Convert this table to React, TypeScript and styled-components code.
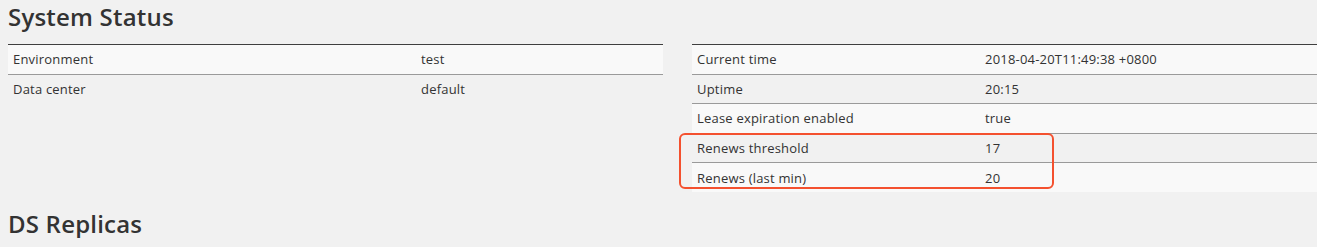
import React from "react";
import styled, { createGlobalStyle } from "styled-components";

type Row = { name: string; value: string };

const general: Row[] = [
  { name: "Environment", value: "test" },
  { name: "Data center", value: "default" },
];

const status: Row[] = [
  { name: "Current time", value: "2018-04-20T11:49:38 +0800" },
  { name: "Uptime", value: "20:15" },
  { name: "Lease expiration enabled", value: "true" },
  { name: "Renews threshold", value: "17" },
  { name: "Renews (last min)", value: "20" },
];

const GlobalStyle = createGlobalStyle`
  html, body {
    margin: 0;
    background: #f1f1f1;
    overflow: hidden;
  }
  body {
    font-family: "Open Sans", "Liberation Sans", sans-serif;
    color: #333;
  }
`;

export default function App() {
  return (
    <>
      <GlobalStyle />
      <Page>
        <Heading>System Status</Heading>
        <Columns>
          <StatusTable rows={general} width={655} nameWidth={408} />
          <RightBox>
            <StatusTable rows={status} nameWidth={288} />
            <Highlight />
          </RightBox>
        </Columns>
        <Heading $gap>DS Replicas</Heading>
      </Page>
    </>
  );
}

const StatusTable = (props: { rows: Row[]; width?: number; nameWidth: number }) => {
  const { rows, width, nameWidth } = props;
  return (
    <Table style={width ? { width } : undefined}>
      <colgroup>
        <col style={{ width: nameWidth }} />
        <col />
      </colgroup>
      <tbody>
        {rows.map((r) => (
          <Tr key={r.name}>
            <Td>{r.name}</Td>
            <Td>{r.value}</Td>
          </Tr>
        ))}
      </tbody>
    </Table>
  );
};

const Page = styled.div`
  padding-left: 8px;
`;

const Heading = styled.h2<{ $gap?: boolean }>`
  margin: 0;
  padding-top: ${({ $gap }) => ($gap ? "18px" : "3px")};
  font-size: 24px;
  line-height: 28px;
  font-weight: 600;
  color: #333;
  letter-spacing: 0.2px;
`;

const Columns = styled.div`
  display: flex;
  align-items: flex-start;
  gap: 29px;
  margin-top: 13px;
`;

const RightBox = styled.div`
  position: relative;
  flex: 1;
`;

const Table = styled.table`
  width: 100%;
  border-collapse: collapse;
  table-layout: fixed;
  border-top: 1px solid #3f3f3f;
  font-size: 13px;
  letter-spacing: 0.2px;
`;

const Tr = styled.tr`
  height: 29.5px;
  & + & {
    border-top: 1.5px solid #9a9a9a;
  }
  &:nth-child(odd) {
    background: #f9f9f9;
  }
`;

const Td = styled.td`
  padding: 0 5px;
  vertical-align: middle;
  color: #333;
  white-space: nowrap;
`;

const Highlight = styled.div`
  position: absolute;
  left: -13px;
  top: 89px;
  width: 371px;
  height: 52px;
  border: 2px solid #f4512f;
  border-radius: 6px;
  pointer-events: none;
`;
